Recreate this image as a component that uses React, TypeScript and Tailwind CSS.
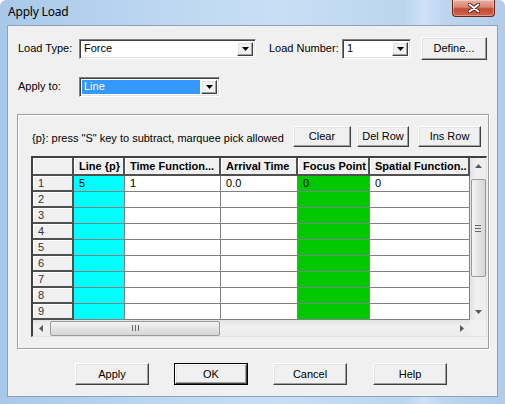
import React from "react";

const raised =
  "bg-[#f0f0f0] border border-t-white border-l-white border-r-[#404040] border-b-[#404040] shadow-[inset_-1px_-1px_#a0a0a0,inset_1px_1px_#e3e3e3]";

function Btn({ label, className }: { label: string; className: string }) {
  return (
    <div className={`${raised} ${className} flex items-center justify-center text-black`}>
      {label}
    </div>
  );
}

function DropBtn() {
  return (
    <div className={`${raised} w-[16px] h-full flex items-center justify-center`}>
      <svg width="7" height="4" viewBox="0 0 7 4">
        <path d="M0 0h7L3.5 4z" fill="#000" />
      </svg>
    </div>
  );
}

function Combo({ w, text, sel }: { w: string; text: string; sel?: boolean }) {
  return (
    <div
      className={`${w} h-[20px] bg-white border border-t-[#808080] border-l-[#808080] border-r-white border-b-white shadow-[inset_1px_1px_#404040,inset_-1px_-1px_#e3e3e3] flex p-[2px] gap-[1px]`}
    >
      {sel ? (
        <div className="flex-1 bg-[#3399ff] text-white flex items-center pl-[2px]">{text}</div>
      ) : (
        <div className="flex-1 flex items-center pl-[2px]">{text}</div>
      )}
      <DropBtn />
    </div>
  );
}

const cols = [
  { w: "w-[51px]", label: "Line {p}", bg: "bg-[#00ffff]", v: "5" },
  { w: "w-[96px]", label: "Time Function...", bg: "bg-white", v: "1" },
  { w: "w-[77px]", label: "Arrival Time", bg: "bg-white", v: "0.0" },
  { w: "w-[72px]", label: "Focus Point", bg: "bg-[#00c800]", v: "0" },
  { w: "w-[100px]", label: "Spatial Function..", bg: "bg-white", v: "0" },
];

const rows = [1, 2, 3, 4, 5, 6, 7, 8, 9];

function Arrow({ dir }: { dir: "up" | "down" | "left" | "right" }) {
  const d =
    dir === "up"
      ? "M0 4L3.5 0L7 4z"
      : dir === "down"
      ? "M0 0h7L3.5 4z"
      : dir === "left"
      ? "M4 0v7L0 3.5z"
      : "M0 0v7L4 3.5z";
  const vert = dir === "up" || dir === "down";
  return (
    <div className="w-[16px] h-[16px] flex items-center justify-center shrink-0">
      <svg width={vert ? 7 : 4} height={vert ? 4 : 7} viewBox={vert ? "0 0 7 4" : "0 0 4 7"}>
        <path d={d} fill="#5a5a5a" />
      </svg>
    </div>
  );
}

function Grid() {
  return (
    <div className="w-[456px] h-[181px] border-t-2 border-l-2 border-r border-b border-t-[#404040] border-l-[#404040] border-r-[#e3e3e3] border-b-[#e3e3e3] flex bg-[#f0f0f0]">
      <div className="w-[437px] flex flex-col">
        <div className="flex h-[18px] font-bold">
          <div className="w-[41px] h-full bg-[#f0f0f0] border-r-2 border-b-2 border-[#505050] shadow-[inset_1px_1px_white]" />
          {cols.map((c) => (
            <div
              key={c.label}
              className={`${c.w} h-full bg-[#f0f0f0] border-r-2 border-b-2 border-[#505050] shadow-[inset_1px_1px_white] flex items-center pl-[5px] whitespace-nowrap overflow-hidden`}
            >
              {c.label}
            </div>
          ))}
        </div>
        {rows.map((r) => (
          <div key={r} className="flex h-[16px]">
            <div className="w-[41px] h-full bg-[#f0f0f0] border-r-2 border-b-2 border-[#505050] shadow-[inset_1px_1px_white] flex items-center pl-[5px] text-[#333]">
              {r}
            </div>
            {cols.map((c) => (
              <div
                key={c.label}
                className={`${c.w} h-full ${c.bg} border-r border-b border-[#808080] flex items-center pl-[5px] whitespace-nowrap overflow-hidden`}
              >
                {r === 1 ? c.v : ""}
              </div>
            ))}
          </div>
        ))}
        <div className="h-[16px] flex bg-[linear-gradient(180deg,#e2e2e2,#f0f0f0_40%,#ececec)]">
          <Arrow dir="left" />
          <div className="flex-1 flex items-center">
            <div className="ml-[1px] w-[170px] h-[15px] rounded-[2px] border border-[#9a9a9a] bg-[linear-gradient(180deg,#f4f4f4,#e2e2e2_55%,#d6d6d6)] flex items-center justify-center gap-[2px]">
              <span className="w-[1px] h-[6px] bg-[#666]" />
              <span className="w-[1px] h-[6px] bg-[#666]" />
              <span className="w-[1px] h-[6px] bg-[#666]" />
            </div>
          </div>
          <Arrow dir="right" />
        </div>
      </div>
      <div className="w-[16px] flex flex-col">
        <div className="h-[162px] flex flex-col bg-[linear-gradient(90deg,#e2e2e2,#f0f0f0_40%,#ececec)]">
          <Arrow dir="up" />
          <div className="flex-1 flex flex-col items-center">
            <div className="mt-[5px] w-[15px] h-[98px] rounded-[2px] border border-[#9a9a9a] bg-[linear-gradient(90deg,#f4f4f4,#e2e2e2_55%,#d6d6d6)] flex flex-col items-center justify-center gap-[2px]">
              <span className="w-[6px] h-[1px] bg-[#666]" />
              <span className="w-[6px] h-[1px] bg-[#666]" />
              <span className="w-[6px] h-[1px] bg-[#666]" />
            </div>
          </div>
          <Arrow dir="down" />
        </div>
        <div className="h-[16px] bg-[#f0f0f0]" />
      </div>
    </div>
  );
}

export default function App() {
  return (
    <div className="w-[505px] h-[404px] flex flex-col rounded-t-[6px] overflow-hidden bg-[linear-gradient(90deg,#a9c8e9_0%,#bcd6f1_30%,#c8def5_55%,#bcd5ef_80%,#cfe2f6_84%,#bdd5ee_88%,#b0cdeb_100%)] font-['Liberation_Sans',Arial,sans-serif] text-[11px] text-black">
      <div className="h-[25px] flex items-start shrink-0">
        <div className="pl-[8px] pt-[5px] text-[12px] leading-[14px] font-['Noto_Sans','Open_Sans',sans-serif] tracking-[-0.2px]">
          Apply Load
        </div>
        <div className="ml-auto mr-[10px] w-[43px] h-[17px] rounded-b-[4px] border border-t-0 border-[#6b2318] bg-[linear-gradient(180deg,#eab0a2_0%,#d98470_45%,#c44a33_55%,#d0654c_100%)] shadow-[inset_0_0_0_1px_rgba(255,255,255,0.35)] flex items-center justify-center">
          <svg width="12" height="10" viewBox="0 0 12 10">
            <path d="M1.5 1.5L10.5 8.5M10.5 1.5L1.5 8.5" stroke="#4a1a12" strokeWidth="3.6" strokeLinecap="round" />
            <path d="M1.5 1.5L10.5 8.5M10.5 1.5L1.5 8.5" stroke="#fff" strokeWidth="2" strokeLinecap="round" />
          </svg>
        </div>
      </div>
      <div className="mx-[7px] w-[491px] h-[372px] border border-[#8da2ba] bg-[#f0f0f0] flex flex-col">
        <div className="mt-[11px] h-[23px] flex items-center pl-[10px]">
          <div className="w-[61px]">Load Type:</div>
          <Combo w="w-[177px]" text="Force" />
          <div className="ml-[13px] w-[73px]">Load Number:</div>
          <Combo w="w-[69px]" text="1" />
          <Btn label="Define..." className="ml-[10px] w-[66px] h-[23px]" />
        </div>
        <div className="mt-[16px] h-[21px] flex items-center pl-[10px]">
          <div className="w-[61px]">Apply to:</div>
          <Combo w="w-[141px]" text="Line" sel />
        </div>
        <div className="mt-[17px] ml-[9px] w-[472px] h-[235px] border border-[#a0a0a0] shadow-[inset_1px_1px_white,1px_1px_white] flex flex-col">
          <div className="mt-[11px] h-[21px] flex items-center pl-[14px] pr-[7px]">
            <div className="pt-[4px]">{'{p}: press "S" key to subtract, marquee pick allowed'}</div>
            <Btn label="Clear" className="ml-auto w-[58px] h-[21px]" />
            <Btn label="Del Row" className="ml-[6px] w-[52px] h-[21px]" />
            <Btn label="Ins Row" className="ml-[9px] w-[63px] h-[21px]" />
          </div>
          <div className="mt-[9px] pl-[13px]">
            <Grid />
          </div>
        </div>
        <div className="mt-[14px] flex pl-[67px]">
          <Btn label="Apply" className="w-[74px] h-[22px]" />
          <div className="ml-[25px] w-[74px] h-[22px] border border-black">
            <Btn label="OK" className="w-full h-full" />
          </div>
          <Btn label="Cancel" className="ml-[25px] w-[74px] h-[22px]" />
          <Btn label="Help" className="ml-[26px] w-[74px] h-[22px]" />
        </div>
      </div>
    </div>
  );
}
